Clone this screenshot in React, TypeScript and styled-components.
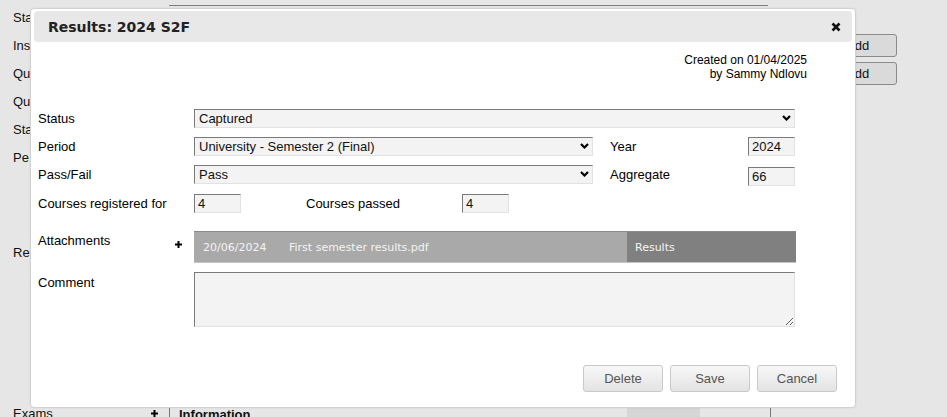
import React from "react";
import styled, { createGlobalStyle } from "styled-components";

const GlobalStyle = createGlobalStyle`
  html, body { margin: 0; padding: 0; background: #e6e6e6; }
  body { font-family: "Liberation Sans", Arial, sans-serif; }
  * { box-sizing: border-box; }
`;

const Page = styled.div`
  position: relative;
  width: 947px;
  height: 417px;
  overflow: hidden;
  background: #e6e6e6;
  font-family: "Liberation Sans", Arial, sans-serif;
  font-size: 13px;
  color: #111;
`;

/* ---------- background page ---------- */
const Backdrop = styled.div`
  display: flex;
  flex-direction: column;
  padding: 3px 0 0 13px;
`;

const BgRow = styled.div<{ $mt?: number }>`
  display: flex;
  align-items: center;
  height: 28px;
  flex: none;
  margin-top: ${(p) => p.$mt ?? 0}px;
`;

const BgLabel = styled.div`
  width: 156px;
  flex: none;
  display: flex;
  align-items: center;
  justify-content: space-between;
  padding-right: 11px;
`;

const BgField = styled.div`
  width: 600px;
  flex: none;
  align-self: stretch;
  display: flex;
`;

const TopLine = styled.div`
  width: 599px;
  height: 1px;
  margin-top: 2px;
  background: #7d7d7d;
`;

const AddButton = styled.div`
  margin-left: 61px;
  width: 67px;
  height: 23px;
  border: 1px solid #8a8a8a;
  border-radius: 3px;
  background: #dadada;
  padding-left: 15px;
  display: flex;
  align-items: center;
`;

const BgCells = styled.div`
  display: flex;
  align-self: stretch;
  border-left: 1px solid #777;
`;

const BgCell = styled.div<{ $w: number; $dark?: boolean; $edge?: boolean }>`
  width: ${(p) => p.$w}px;
  background: ${(p) => (p.$dark ? "#d6d6d6" : "transparent")};
  border-right: ${(p) => (p.$edge ? "1px solid #777" : "none")};
  font-weight: bold;
  padding: 8px 0 0 9px;
`;

/* ---------- dialog ---------- */
const Dialog = styled.div`
  position: absolute;
  left: 30px;
  top: 8px;
  width: 826px;
  height: 400px;
  background: #fff;
  border: 1px solid #d2d2d2;
  border-radius: 4px;
  padding: 2px 3px 0;
  display: flex;
  flex-direction: column;
  box-shadow: 0 0 2px rgba(0, 0, 0, 0.08);
`;

const Header = styled.div`
  height: 31px;
  flex: none;
  background: #e8e8e8;
  border-radius: 4px;
  display: flex;
  align-items: center;
  justify-content: space-between;
  padding: 0 11px 0 14px;
`;

const Title = styled.div`
  font-family: "DejaVu Sans", Verdana, sans-serif;
  font-weight: bold;
  font-size: 14px;
  color: #222;
`;

const Body = styled.div`
  display: flex;
  flex-direction: column;
  padding-left: 4px;
`;

const Created = styled.div`
  align-self: flex-end;
  margin-top: 11px;
  padding-right: 45px;
  text-align: right;
  font-size: 12px;
  line-height: 14px;
  color: #000;
`;

const FormRow = styled.div<{ $mt: number; $h: number; $top?: boolean }>`
  display: flex;
  align-items: ${(p) => (p.$top ? "flex-start" : "center")};
  margin-top: ${(p) => p.$mt}px;
  height: ${(p) => p.$h}px;
  flex: none;
`;

const Label = styled.div<{ $w?: number; $ml?: number; $pt?: number }>`
  width: ${(p) => p.$w ?? 156}px;
  margin-left: ${(p) => p.$ml ?? 0}px;
  padding-top: ${(p) => p.$pt ?? 0}px;
  flex: none;
  color: #000;
  line-height: 15px;
  display: flex;
  justify-content: space-between;
  padding-right: 12px;
`;

const PlusWrap = styled.span`
  margin-top: 8px;
  display: flex;
`;

const SelectWrap = styled.div<{ $w: number }>`
  position: relative;
  width: ${(p) => p.$w}px;
  height: 19px;
  flex: none;
`;

const inset = `
  border-top: 1px solid #7a7a7a;
  border-left: 1px solid #7a7a7a;
  border-right: 1px solid #e2e2e2;
  border-bottom: 1px solid #e2e2e2;
  background: #f3f3f3;
  font-family: "Liberation Sans", Arial, sans-serif;
  font-size: 13px;
  color: #111;
  outline: none;
  border-radius: 0;
`;

const Select = styled.select`
  ${inset}
  appearance: none;
  width: 100%;
  height: 19px;
  padding: 0 20px 0 4px;
  margin: 0;
`;

const Chevron = styled.svg`
  position: absolute;
  right: 4px;
  top: 6px;
  pointer-events: none;
`;

const TextInput = styled.input<{ $mt?: number }>`
  ${inset}
  width: 47px;
  height: 19px;
  padding: 0 3px;
  margin: ${(p) => p.$mt ?? 0}px 0 0 0;
  flex: none;
`;

const AttachTable = styled.div`
  width: 602px;
  height: 32px;
  display: grid;
  grid-template-columns: 86px 347px 1fr;
  border-top: 1px solid #8a8a8a;
  border-bottom: 1px solid #c4c4c4;
  font-family: "DejaVu Sans", Verdana, sans-serif;
  font-size: 11px;
  color: #f4f4f4;
`;

const AttachCell = styled.div<{ $dark?: boolean; $pl?: number }>`
  background: ${(p) => (p.$dark ? "#808080" : "#a9a9a9")};
  display: flex;
  align-items: center;
  padding-left: ${(p) => p.$pl ?? 9}px;
  padding-top: 1px;
`;

const TextArea = styled.textarea`
  ${inset}
  width: 601px;
  height: 55px;
  resize: vertical;
  padding: 2px 4px;
  margin: 0;
`;

const ButtonBar = styled.div`
  display: flex;
  justify-content: flex-end;
  gap: 7px;
  margin-top: 38px;
  padding-right: 15px;
`;

const Button = styled.button`
  width: 80px;
  height: 27px;
  border: 1px solid #c9c9c9;
  border-radius: 3px;
  background: linear-gradient(#f8f8f8, #e3e3e3);
  color: #555;
  font-family: "Liberation Sans", Arial, sans-serif;
  font-size: 13px;
  padding: 0;
`;

const Plus = () => (
  <svg width="7" height="7" viewBox="0 0 7 7">
    <path d="M3.5 0V7M0 3.5H7" stroke="#000" strokeWidth="2" />
  </svg>
);

const ChevronIcon = () => (
  <Chevron width="9" height="6" viewBox="0 0 9 6">
    <path d="M1 1L4.5 4.5L8 1" stroke="#000" strokeWidth="2.2" fill="none" />
  </Chevron>
);

const CloseIcon = () => (
  <svg width="10" height="10" viewBox="0 0 10 10">
    <path d="M1.5 1.5L8.5 8.5M8.5 1.5L1.5 8.5" stroke="#111" strokeWidth="2.6" />
  </svg>
);

export default function App() {
  return (
    <Page>
      <GlobalStyle />
      <Backdrop>
        <BgRow>
          <BgLabel>Sta</BgLabel>
          <BgField>
            <TopLine />
          </BgField>
        </BgRow>
        <BgRow>
          <BgLabel>Ins</BgLabel>
          <BgField />
          <AddButton>Add</AddButton>
        </BgRow>
        <BgRow>
          <BgLabel>Qu</BgLabel>
          <BgField />
          <AddButton>Add</AddButton>
        </BgRow>
        <BgRow>
          <BgLabel>Qu</BgLabel>
        </BgRow>
        <BgRow>
          <BgLabel>Sta</BgLabel>
        </BgRow>
        <BgRow>
          <BgLabel>Pe</BgLabel>
        </BgRow>
        <BgRow $mt={67}>
          <BgLabel>Re</BgLabel>
        </BgRow>
        <BgRow $mt={133}>
          <BgLabel>
            Exams
            <Plus />
          </BgLabel>
          <BgCells>
            <BgCell $w={457}>Information</BgCell>
            <BgCell $w={73} $dark />
            <BgCell $w={71} $edge />
          </BgCells>
        </BgRow>
      </Backdrop>

      <Dialog>
        <Header>
          <Title>Results: 2024 S2F</Title>
          <CloseIcon />
        </Header>
        <Body>
          <Created>
            Created on 01/04/2025
            <br />
            by Sammy Ndlovu
          </Created>

          <FormRow $mt={28} $h={19}>
            <Label>Status</Label>
            <SelectWrap $w={601}>
              <Select defaultValue="Captured">
                <option>Captured</option>
              </Select>
              <ChevronIcon />
            </SelectWrap>
          </FormRow>

          <FormRow $mt={9} $h={19}>
            <Label>Period</Label>
            <SelectWrap $w={399}>
              <Select defaultValue="University - Semester 2 (Final)">
                <option>University - Semester 2 (Final)</option>
              </Select>
              <ChevronIcon />
            </SelectWrap>
            <Label $w={138} $ml={17}>Year</Label>
            <TextInput defaultValue="2024" />
          </FormRow>

          <FormRow $mt={9} $h={19}>
            <Label>Pass/Fail</Label>
            <SelectWrap $w={399}>
              <Select defaultValue="Pass">
                <option>Pass</option>
              </Select>
              <ChevronIcon />
            </SelectWrap>
            <Label $w={138} $ml={17}>Aggregate</Label>
            <TextInput defaultValue="66" $mt={3} />
          </FormRow>

          <FormRow $mt={10} $h={18}>
            <Label>Courses registered for</Label>
            <TextInput defaultValue="4" />
            <Label $ml={65}>Courses passed</Label>
            <TextInput defaultValue="4" $mt={1} />
          </FormRow>

          <FormRow $mt={19} $h={32} $top>
            <Label $pt={2}>
              Attachments
              <PlusWrap>
                <Plus />
              </PlusWrap>
            </Label>
            <AttachTable>
              <AttachCell>20/06/2024</AttachCell>
              <AttachCell>First semester results.pdf</AttachCell>
              <AttachCell $dark $pl={8}>Results</AttachCell>
            </AttachTable>
          </FormRow>

          <FormRow $mt={9} $h={55} $top>
            <Label $pt={3}>Comment</Label>
            <TextArea />
          </FormRow>

          <ButtonBar>
            <Button>Delete</Button>
            <Button>Save</Button>
            <Button>Cancel</Button>
          </ButtonBar>
        </Body>
      </Dialog>
    </Page>
  );
}
